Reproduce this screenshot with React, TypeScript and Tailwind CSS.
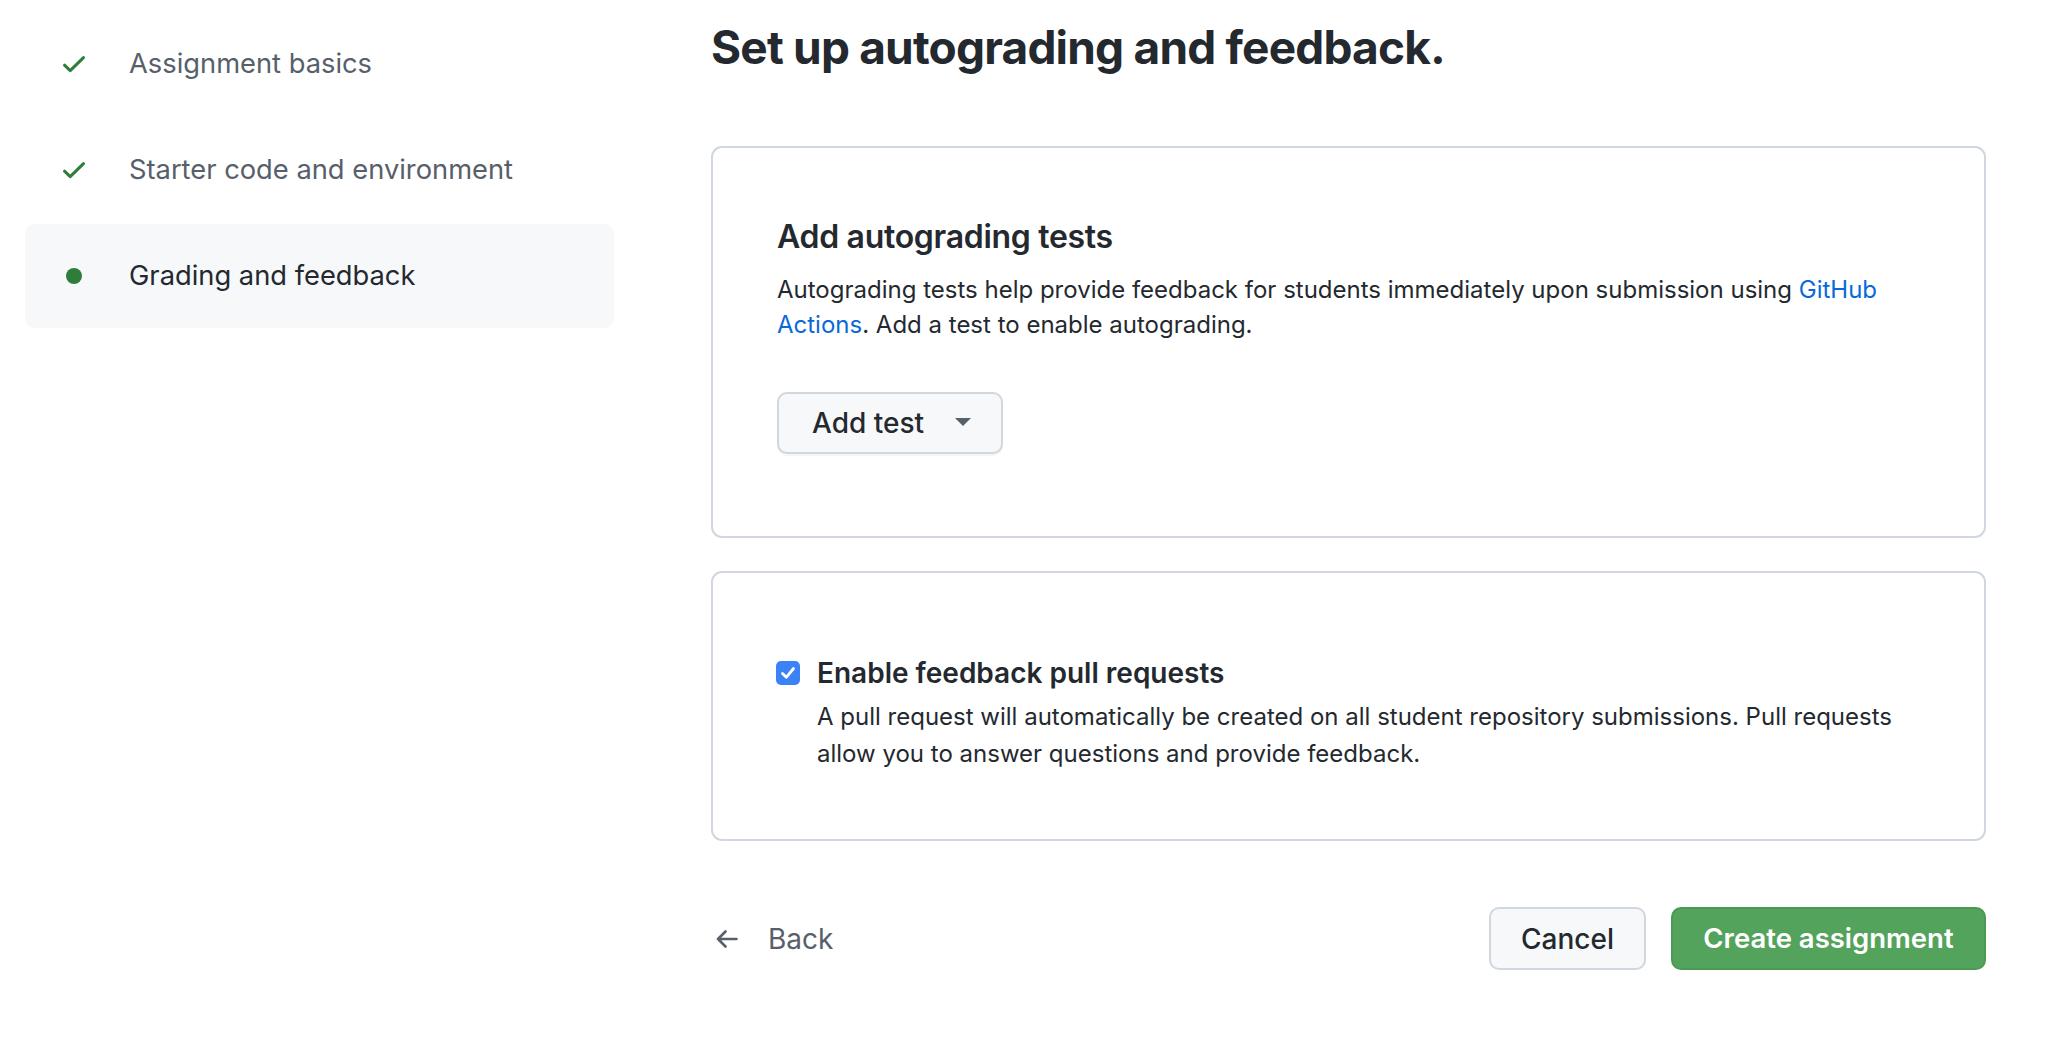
import React from "react";

function Check() {
  return (
    <svg width="24" height="24" viewBox="0 0 24 24" className="shrink-0">
      <path d="M2.5 13.2 L8.2 18.6 L21.5 5.6" fill="none" stroke="#2f7d3b" strokeWidth="3" strokeLinecap="round" strokeLinejoin="round" />
    </svg>
  );
}

function Dot() {
  return (
    <span className="flex h-6 w-6 shrink-0 items-center justify-center">
      <span className="block h-4 w-4 rounded-full bg-[#2f7d3b]" />
    </span>
  );
}

function StepItem({ label, done, active }: { label: string; done?: boolean; active?: boolean }) {
  return (
    <div
      className={
        "flex h-[104px] items-center gap-[43px] rounded-[10px] pl-[37px] " +
        (active ? "bg-[#f6f8fa] text-[#24292f]" : "text-[#57606a]")
      }
    >
      {done ? <Check /> : <Dot />}
      <span className="text-[27.3px] leading-none">{label}</span>
    </div>
  );
}

export default function App() {
  return (
    <div
      className="flex min-h-[1054px] w-full bg-white text-[#24292f]"
      style={{ fontFamily: "Inter, 'Noto Sans', 'Liberation Sans', sans-serif" }}
    >
      <aside className="flex w-[614px] shrink-0 flex-col gap-[2px] pl-[25px] pt-[12px]">
        <StepItem label="Assignment basics" done />
        <StepItem label="Starter code and environment" done />
        <StepItem label="Grading and feedback" active />
      </aside>

      <main className="ml-[97px] flex w-[1275px] flex-col">
        <h1 className="mt-[17px] h-[60px] text-[46px] font-bold leading-[60px] tracking-[-0.8px]">
          Set up autograding and feedback.
        </h1>

        <section className="mt-[69px] h-[392px] rounded-[11px] border-2 border-[#d0d7de] pl-[64px] pr-[64px] pt-[67px]">
          <h2 className="h-[44px] text-[32px] font-semibold leading-[44px] tracking-[-0.3px]">Add autograding tests</h2>
          <p className="mt-[13px] text-[24px] leading-[35px]">
            Autograding tests help provide feedback for students immediately upon submission using{" "}
            <a className="text-[#0969da]">GitHub</a> <a className="text-[#0969da]">Actions</a>. Add a test to enable
            autograding.
          </p>
          <button className="mt-[50px] flex h-[62px] w-[226px] items-center rounded-[10px] border-2 border-[#d0d7de] bg-[#f6f8fa] pl-[33px] text-[28px] font-medium shadow-[0_2px_0_rgba(27,31,36,0.04)]">
            <span>Add test</span>
            <svg width="16" height="10" viewBox="0 0 16 10" className="ml-[31px]">
              <path d="M0 0 H16 L8 8 Z" fill="#57606a" />
            </svg>
          </button>
        </section>

        <section className="mt-[33px] h-[270px] rounded-[11px] border-2 border-[#d0d7de] pl-[63px] pr-[64px] pt-[81px]">
          <label className="flex h-[38px] items-center gap-[17px]">
            <span className="flex h-6 w-6 items-center justify-center rounded-[5px] bg-[#3b82f6]">
              <svg width="20" height="20" viewBox="0 0 20 20">
                <path d="M4.5 10.5 L8.3 14.3 L15.5 5.5" fill="none" stroke="white" strokeWidth="2.8" strokeLinecap="round" strokeLinejoin="round" />
              </svg>
            </span>
            <span className="text-[28px] font-semibold leading-none">Enable feedback pull requests</span>
          </label>
          <p className="mt-[6px] pl-[41px] text-[24px] leading-[37px]">
            A pull request will automatically be created on all student repository submissions. Pull requests allow you
            to answer questions and provide feedback.
          </p>
        </section>

        <div className="mt-[66px] flex h-[63px] items-center">
          <div className="flex items-center gap-[30px] pl-[5px] text-[#57606a]">
            <svg width="22" height="18" viewBox="0 0 22 18">
              <path d="M20.5 9 H2 M9.5 1.5 L2 9 L9.5 16.5" fill="none" stroke="#57606a" strokeWidth="2.6" strokeLinecap="round" strokeLinejoin="round" />
            </svg>
            <span className="text-[28px]">Back</span>
          </div>
          <div className="ml-auto flex gap-[25px]">
            <button className="h-[63px] w-[157px] rounded-[10px] border-2 border-[#d0d7de] bg-[#f6f8fa] text-[28px] font-medium text-[#24292f]">
              Cancel
            </button>
            <button className="h-[63px] w-[315px] rounded-[10px] border-2 border-[#4a9a52] bg-[#54a35c] text-[27.5px] font-semibold text-white">
              Create assignment
            </button>
          </div>
        </div>
      </main>
    </div>
  );
}
